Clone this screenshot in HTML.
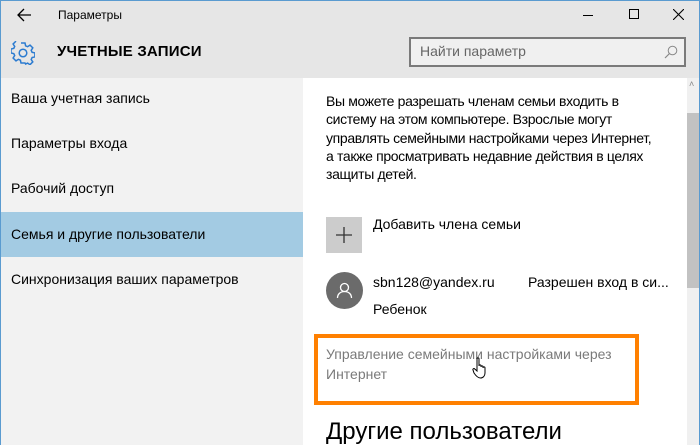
<!DOCTYPE html>
<html><head><meta charset="utf-8"><style>
*{margin:0;padding:0;box-sizing:border-box}
body{width:700px;height:445px;overflow:hidden;font-family:"Segoe UI","Liberation Sans","DejaVu Sans",sans-serif;color:#000;position:relative;background:#fff}
.a{position:absolute;white-space:nowrap}
</style></head><body>
<div class="a" style="left:0;top:0;width:700px;height:78px;background:#e6e6e6"></div>
<div class="a" style="left:0;top:78px;width:303px;height:367px;background:#f2f2f2"></div>
<div class="a" style="left:0;top:0;width:700px;height:1px;background:#5a9bd0"></div>
<div class="a" style="left:0;top:0;width:1px;height:445px;background:#5a9bd0"></div>
<div class="a" style="left:699px;top:0;width:1px;height:445px;background:#5a9bd0"></div>
<svg class="a" style="left:16px;top:8px" width="16" height="14"><path d="M15 7H2M8 1L2 7l6 6" stroke="#000" stroke-width="1.3" fill="none"/></svg>
<div class="a" style="left:58px;top:8px;font-size:12px">Параметры</div>
<div class="a" style="left:583px;top:15px;width:10px;height:1px;background:#000"></div>
<div class="a" style="left:629px;top:9px;width:10px;height:10px;border:1px solid #000"></div>
<svg class="a" style="left:673px;top:9px" width="11" height="11"><path d="M0 0L11 11M11 0L0 11" stroke="#000" stroke-width="1.1"/></svg>
<svg class="a" style="left:11px;top:41px" width="24" height="24" viewBox="0 0 24 24"><g fill="none" stroke="#2b7bd0" stroke-width="1.5"><path d="M10 2h4l.6 2.8 2 .9 2.4-1.6 2.8 2.8-1.6 2.4.9 2 2.8.6v4l-2.8.6-.9 2 1.6 2.4-2.8 2.8-2.4-1.6-2 .9L14 22h-4l-.6-2.8-2-.9L5 19.9 2.1 17l1.6-2.4-.9-2L0 12v-4l2.8-.6.9-2L2.1 3 5 .1"/><circle cx="12" cy="12" r="3.8"/></g></svg>
<div class="a" style="left:57px;top:43px;font-size:15px;font-weight:bold;letter-spacing:0.2px">УЧЕТНЫЕ ЗАПИСИ</div>
<div class="a" style="left:409px;top:37px;width:277px;height:30px;border:2px solid #7a7a7a;background:#f0f0f0"></div>
<div class="a" style="left:420px;top:43px;font-size:14px;color:#666">Найти параметр</div>
<svg class="a" style="left:664px;top:45px" width="14" height="14"><circle cx="8.5" cy="5.5" r="4.3" fill="none" stroke="#888"/><path d="M5.5 8.5L1 13" stroke="#888" stroke-width="1.2"/></svg>
<div class="a" style="left:11px;top:90px;font-size:14px">Ваша учетная запись</div>
<div class="a" style="left:11px;top:135px;font-size:14px">Параметры входа</div>
<div class="a" style="left:11px;top:180px;font-size:14px">Рабочий доступ</div>
<div class="a" style="left:1px;top:212px;width:302px;height:45px;background:#a3cbe3"></div>
<div class="a" style="left:11px;top:226px;font-size:14px">Семья и другие пользователи</div>
<div class="a" style="left:11px;top:271px;font-size:14px">Синхронизация ваших параметров</div>
<div class="a" style="left:687px;top:78px;width:12px;height:367px;background:#f0f0f0"></div>
<div class="a" style="left:687px;top:113px;width:12px;height:175px;background:#c2c2c2"></div>
<div class="a" style="left:689px;top:79px;font-size:9px;color:#888">˄</div>
<div class="a" style="left:326px;top:92px;font-size:14px;line-height:18.3px;letter-spacing:-0.35px">Вы можете разрешать членам семьи входить в<br>систему на этом компьютере. Взрослые могут<br>управлять семейными настройками через Интернет,<br>а также просматривать недавние действия в целях<br>защиты детей.</div>
<div class="a" style="left:326px;top:217px;width:36px;height:36px;background:#ccc"></div>
<svg class="a" style="left:335px;top:226px" width="18" height="18"><path d="M9 1v16M1 9h16" stroke="#333" stroke-width="1.3"/></svg>
<div class="a" style="left:373px;top:216px;font-size:14px">Добавить члена семьи</div>
<div class="a" style="left:326px;top:272px;width:37px;height:37px;border-radius:50%;background:#6b6b6b"></div>
<svg class="a" style="left:335px;top:281px" width="19" height="19"><circle cx="9.5" cy="6.5" r="4" fill="none" stroke="#fff" stroke-width="1.3"/><path d="M2.5 17c0-4 3-6.5 7-6.5s7 2.5 7 6.5" fill="none" stroke="#fff" stroke-width="1.3"/></svg>
<div class="a" style="left:373px;top:274px;font-size:14px">sbn128@yandex.ru</div>
<div class="a" style="left:528px;top:274px;font-size:14px">Разрешен вход в си...</div>
<div class="a" style="left:373px;top:301px;font-size:14px">Ребенок</div>
<div class="a" style="left:314px;top:334px;width:325px;height:71px;border:4px solid #ff8000"></div>
<div class="a" style="left:326px;top:344px;font-size:14px;line-height:20px;color:#7a7a7a">Управление семейными настройками через<br>Интернет</div>
<svg class="a" style="left:472px;top:357px" width="16" height="22"><path d="M5 2c0-1.5 2-1.5 2 0v7c0-1.5 2-1.5 2 0v1c0-1.5 2-1.5 2 0v1c0-1.5 2-1.5 2 0v5c0 3-2 5-4.5 5S4 19 2 16L1 13c-.5-1 .8-2 1.8-1L5 14z" fill="#fff" stroke="#000" stroke-width="1"/></svg>
<div class="a" style="left:326px;top:418px;font-size:24px">Другие пользователи</div>
</body></html>
